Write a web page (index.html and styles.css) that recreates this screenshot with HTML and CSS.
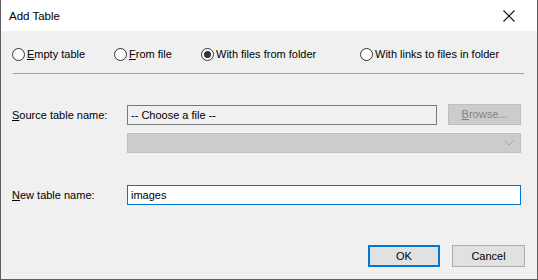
FILE: index.html
```html
<!DOCTYPE html>
<html>
<head>
<meta charset="utf-8">
<link rel="stylesheet" href="styles.css">
</head>
<body>
<div class="window">
  <div class="titlebar">
    <span class="title">Add Table</span>
    <svg class="close" width="12" height="12" viewBox="0 0 12 12"><path d="M0.5 0.5 L11.5 11.5 M11.5 0.5 L0.5 11.5" stroke="#111" stroke-width="1.1" fill="none"/></svg>
  </div>
  <div class="content">
    <div class="radios">
      <label class="radio"><span class="dot"></span><span><u>E</u>mpty table</span></label>
      <label class="radio"><span class="dot"></span><span><u>F</u>rom file</span></label>
      <label class="radio"><span class="dot checked"></span><span>With files from folder</span></label>
      <label class="radio"><span class="dot"></span><span>With links to files in folder</span></label>
    </div>
    <div class="sep"></div>
    <div class="form">
      <div class="row r1">
        <span class="label"><u>S</u>ource table name:</span>
        <div class="field readonly">-- Choose a file --</div>
        <div class="btn disabled"><u>B</u>rowse...</div>
      </div>
      <div class="row r2">
        <span class="label"></span>
        <div class="combo">
          <svg width="10" height="6" viewBox="0 0 10 6"><path d="M0.5 0.5 L5 5 L9.5 0.5" stroke="#a6a6a6" fill="none" stroke-width="1"/></svg>
        </div>
      </div>
      <div class="row r3">
        <span class="label"><u>N</u>ew table name:</span>
        <div class="field focus">images</div>
      </div>
    </div>
    <div class="buttons">
      <div class="btn default">OK</div>
      <div class="btn">Cancel</div>
    </div>
  </div>
</div>
</body>
</html>
```
FILE: styles.css
```css
* { box-sizing: border-box; }
html, body { margin: 0; padding: 0; }
body {
  width: 538px; height: 280px; overflow: hidden;
  font-family: "Liberation Sans", Arial, sans-serif;
  font-size: 11px; color: #000;
}
.window {
  width: 538px; height: 280px;
  border: 1px solid #5f5f5f; border-top: none;
  background: #f0f0f0;
  display: flex; flex-direction: column;
}
.titlebar {
  height: 31px; background: #fff;
  display: flex; align-items: center; justify-content: space-between;
  padding: 0 22px 0 8px;
}
.title { font-size: 11.5px; line-height: 16px; }
.content { flex: 1; display: flex; flex-direction: column; padding: 0 12px 0 11px; }
.radios {
  display: grid; grid-template-columns: 102px 87px 159px 1fr;
  margin-top: 16px; height: 15px; align-items: center;
}
.radio { display: flex; align-items: center; gap: 2px; line-height: 15px; }
.dot {
  width: 13px; height: 13px; border-radius: 50%;
  border: 1px solid #333; background: #fff;
  display: flex; align-items: center; justify-content: center;
}
.dot.checked::after {
  content: ""; width: 7px; height: 7px; border-radius: 50%; background: #333;
}
u { text-decoration-thickness: 1px; text-underline-offset: 1px; }
.sep { height: 1px; background: #a0a0a0; margin: 11px 1px 0 1px; }
.form { display: flex; flex-direction: column; margin-top: 30px; }
.row { display: flex; align-items: center; }
.label { width: 115px; flex: none; }
.r2 { margin-top: 8px; }
.r3 { margin-top: 32px; }
.field {
  height: 20px; line-height: 18px; padding-left: 3px;
  border: 1px solid #7a7a7a; background: #f0f0f0;
}
.field.readonly { width: 310px; }
.field.focus { width: 394px; border-color: #0078d7; background: #fff; }
.btn {
  width: 73px; height: 22px; line-height: 20px; text-align: center;
  border: 1px solid #adadad; background: #e1e1e1;
}
.r1 .btn { margin-left: 11px; height: 21px; line-height: 19px; }
.btn.disabled { background: #cccccc; border-color: #bfbfbf; color: #838383; }
.combo {
  width: 394px; height: 20px; background: #cccccc; border: 1px solid #bfbfbf;
  display: flex; align-items: center; justify-content: flex-end; padding-right: 6px;
}
.buttons {
  margin-top: auto; margin-bottom: 12px;
  display: flex; justify-content: flex-end; gap: 12px;
}
.btn.default { width: 72px; border: 2px solid #0078d7; line-height: 18px; }
```
